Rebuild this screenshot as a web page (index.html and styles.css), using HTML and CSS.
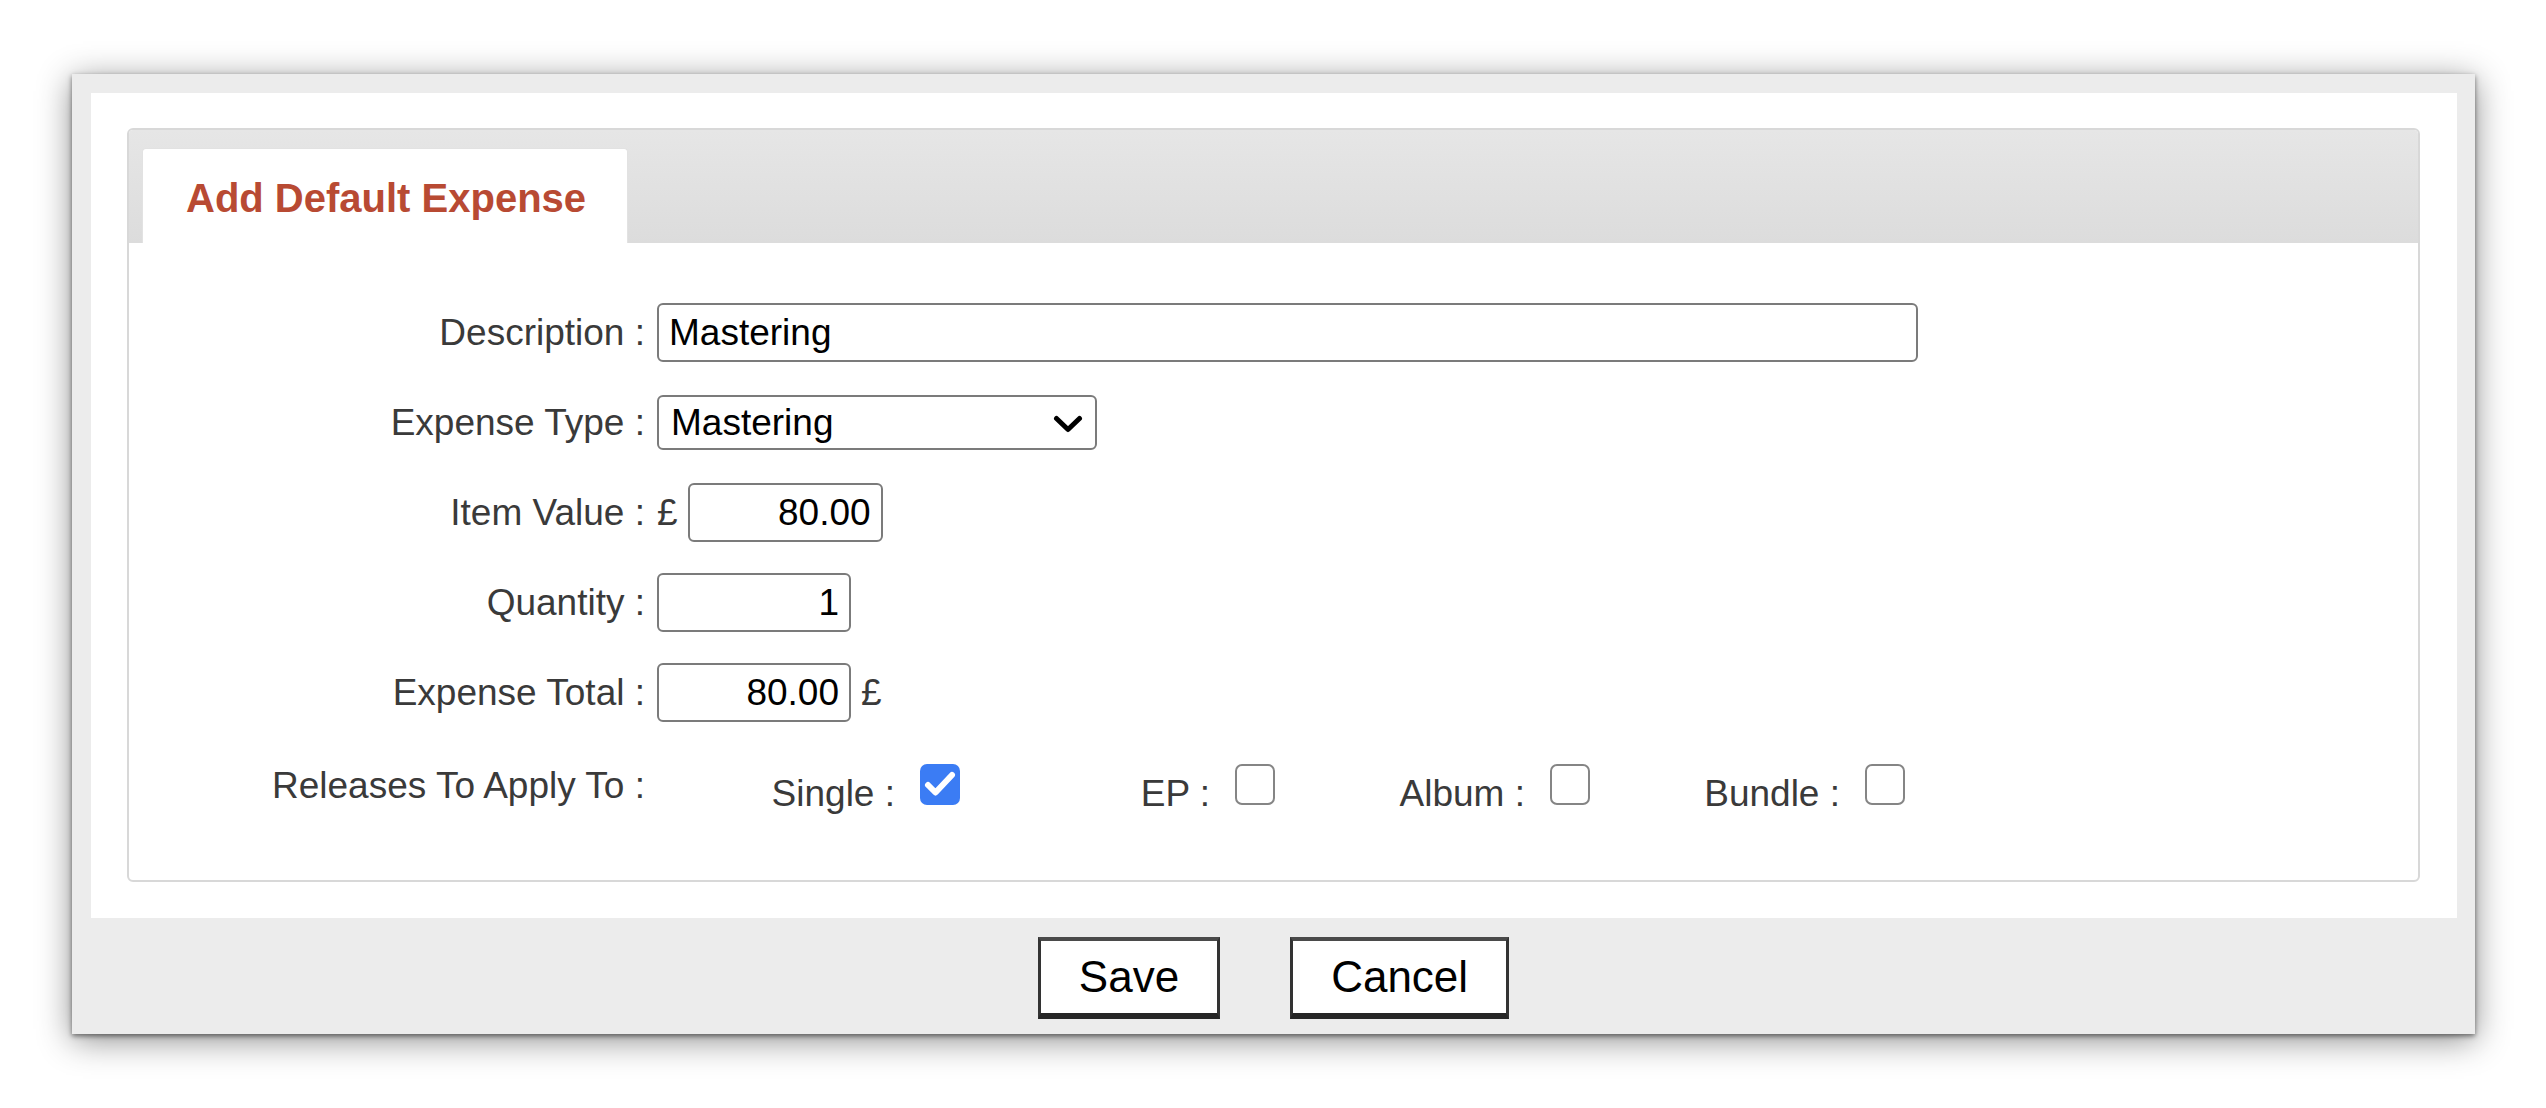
FILE: index.html
```html
<!DOCTYPE html>
<html lang="en">
<head>
    <meta charset="UTF-8">
    <meta name="viewport" content="width=device-width, initial-scale=1.0">
    <title>Add Default Expense</title>
    <link rel="stylesheet" href="styles.css">
</head>
<body>
    <div class="dialog">
        <div class="dialog-body">
            <div class="panel">
                <div class="tabs">
                    <div class="tab">Add Default Expense</div>
                </div>
                <form id="expenseForm" class="form-grid">
                    <label class="form-label" for="description">Description :</label>
                    <div class="field">
                        <input type="text" id="description" class="text-input desc-input" value="Mastering">
                    </div>

                    <label class="form-label" for="expenseType">Expense Type :</label>
                    <div class="field">
                        <span class="select-wrap">
                            <select id="expenseType" class="select-input">
                                <option selected>Mastering</option>
                                <option>Mixing</option>
                                <option>Artwork</option>
                                <option>Promotion</option>
                            </select>
                            <svg class="chevron" width="30" height="18" viewBox="0 0 30 18">
                                <path d="M3.5 3.5 L15 14.5 L26.5 3.5" fill="none" stroke="#000" stroke-width="5" stroke-linecap="round" stroke-linejoin="round"/>
                            </svg>
                        </span>
                    </div>

                    <label class="form-label" for="itemValue">Item Value :</label>
                    <div class="field">
                        <span class="currency">£</span>
                        <input type="text" id="itemValue" class="text-input num-input value-input" value="80.00">
                    </div>

                    <label class="form-label" for="quantity">Quantity :</label>
                    <div class="field">
                        <input type="text" id="quantity" class="text-input num-input" value="1">
                    </div>

                    <label class="form-label" for="expenseTotal">Expense Total :</label>
                    <div class="field">
                        <input type="text" id="expenseTotal" class="text-input num-input" value="80.00">
                        <span class="currency">£</span>
                    </div>

                    <div class="form-label releases-label">Releases To Apply To :</div>
                    <div class="options">
                        <label class="opt">
                            <span class="opt-text">Single :</span>
                            <span class="box checked">
                                <svg width="40" height="41" viewBox="0 0 40 41">
                                    <path d="M8 21 L15.5 28.5 L32 11" fill="none" stroke="#fff" stroke-width="6" stroke-linecap="round" stroke-linejoin="round"/>
                                </svg>
                            </span>
                        </label>
                        <label class="opt">
                            <span class="opt-text">EP :</span>
                            <span class="box"></span>
                        </label>
                        <label class="opt">
                            <span class="opt-text">Album :</span>
                            <span class="box"></span>
                        </label>
                        <label class="opt">
                            <span class="opt-text">Bundle :</span>
                            <span class="box"></span>
                        </label>
                    </div>
                </form>
            </div>
        </div>
        <div class="dialog-footer">
            <button type="submit" form="expenseForm" class="btn">Save</button>
            <button type="button" class="btn">Cancel</button>
        </div>
    </div>
</body>
</html>
```

FILE: styles.css
```css
body {
    margin: 0;
    padding: 74px 0 74px 72px;
    background: #fff;
    font-family: "Liberation Sans", Arial, sans-serif;
}

.dialog {
    width: 2403px;
    height: 960px;
    background: #ececec;
    box-shadow: 0 2px 5px rgba(0, 0, 0, 0.5), 0 6px 32px rgba(0, 0, 0, 0.45);
    display: flex;
    flex-direction: column;
}
.dialog-body {
    margin: 19px 18px 0 19px;
    padding: 35px 37px 36px 36px;
    background: #fff;
}

/* tabbed panel */
.panel {
    border: 2px solid #d8d8d8;
    border-radius: 6px;
    background: #fff;
}
.tabs {
    height: 113px;
    box-sizing: border-box;
    padding: 18px 0 0 13px;
    background: linear-gradient(#e6e6e6, #dcdcdc);
    border-radius: 4px 4px 0 0;
}
.tab {
    width: 486px;
    height: 95px;
    box-sizing: border-box;
    padding: 26px 0 0 43px;
    background: #fff;
    border: 1px solid #e2e2e2;
    border-bottom: none;
    border-radius: 4px 4px 0 0;
    color: #b84a33;
    font-size: 40px;
    font-weight: bold;
    line-height: 46px;
}

/* form rows */
.form-grid {
    display: grid;
    grid-template-columns: 516px 1fr;
    grid-auto-rows: 59px;
    row-gap: 31px;
    padding: 60px 0 68px;
    margin: 0;
}
.form-label {
    align-self: center;
    text-align: right;
    color: #3a3a3a;
    font-size: 37px;
    line-height: 42px;
}
.field {
    display: flex;
    align-items: center;
    gap: 10px;
    padding-left: 12px;
}
.currency {
    color: #3a3a3a;
    font-size: 37px;
}
.text-input {
    height: 59px;
    box-sizing: border-box;
    padding: 0 10px;
    border: 2px solid #7b7b7b;
    border-radius: 6px;
    background: #fff;
    color: #000;
    font-family: inherit;
    font-size: 37px;
    outline: none;
}
.desc-input {
    width: 1261px;
}
.num-input {
    width: 194px;
    text-align: right;
}
.value-input {
    width: 195px;
}
.select-wrap {
    position: relative;
    display: inline-flex;
}
.select-input {
    width: 440px;
    height: 55px;
    box-sizing: border-box;
    padding: 0 50px 0 12px;
    border: 2px solid #7b7b7b;
    border-radius: 6px;
    background: #fff;
    color: #000;
    font-family: inherit;
    font-size: 37px;
    appearance: none;
    -webkit-appearance: none;
    outline: none;
}
.chevron {
    position: absolute;
    right: 14px;
    top: 20px;
    pointer-events: none;
}

/* release checkboxes */
.releases-label {
    align-self: start;
    margin-top: 12px;
}
.options {
    display: flex;
}
.opt {
    width: 315px;
    display: flex;
    justify-content: flex-end;
    align-items: flex-start;
    color: #3a3a3a;
    font-size: 37px;
    line-height: 42px;
}
.opt-text {
    margin-top: 20px;
}
.box {
    width: 40px;
    height: 41px;
    box-sizing: border-box;
    margin: 11px 0 0 25px;
    border: 2px solid #858585;
    border-radius: 7px;
    background: #fff;
}
.box.checked {
    border: none;
    background: #3b7cf4;
}
.box svg {
    display: block;
}

/* footer buttons */
.dialog-footer {
    flex: 1;
    display: flex;
    justify-content: center;
    align-items: flex-start;
    gap: 70px;
    padding-top: 19px;
}
.btn {
    height: 82px;
    box-sizing: border-box;
    padding: 0 38px;
    background: #fff;
    border-style: solid;
    border-width: 4px 3px 6px;
    border-color: #4a4a4a #333 #262626;
    border-radius: 0;
    color: #000;
    font-family: inherit;
    font-size: 44px;
    cursor: pointer;
}
.btn:hover {
    background: #f6f6f6;
}
```
